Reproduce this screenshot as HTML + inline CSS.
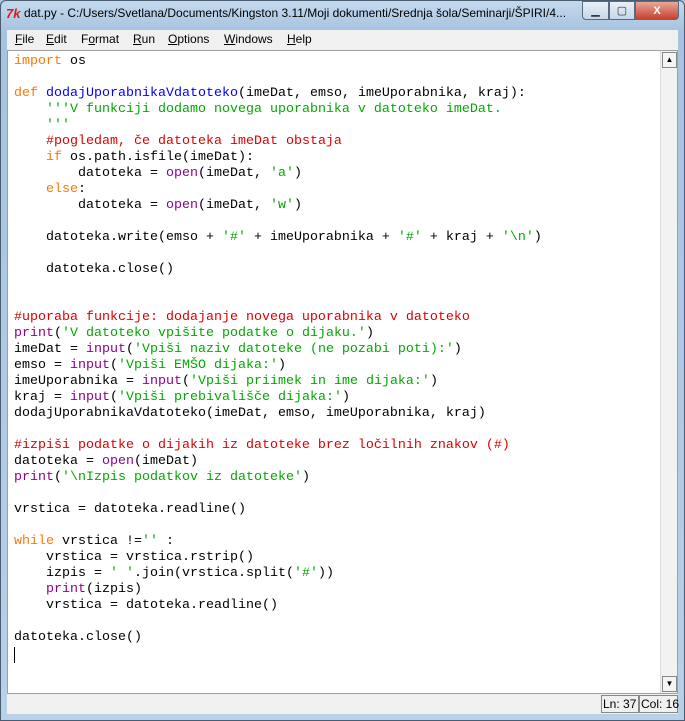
<!DOCTYPE html>
<html><head><meta charset="utf-8"><style>
*{margin:0;padding:0;box-sizing:border-box}
body{width:685px;height:721px;overflow:hidden;background:#a9c6e3;font-family:"Liberation Sans",sans-serif;position:relative}
.frame{position:absolute;inset:0;background:linear-gradient(#c4d9ee,#a7c3e0 30px,#b8d0e8);border:1px solid #4a5c70;border-radius:6px 6px 0 0}
.title{position:absolute;left:24px;top:6px;font-size:12px;color:#000;white-space:nowrap}
.logo{position:absolute;left:6px;top:6px;font-size:13px;color:#d02020;font-style:italic;font-weight:bold}
.btns{position:absolute;right:6px;top:1px;display:flex}
.b{height:19px;border:1px solid #5a6a80;background:linear-gradient(#e8f0f8,#c6d6e8);display:flex;align-items:center;justify-content:center;font-size:11px;color:#333}
.x{width:44px;background:linear-gradient(#e8a898,#c84030);color:#fff;font-weight:bold;border-radius:0 0 4px 0}
.menu{position:absolute;left:7px;top:30px;width:671px;height:20px;background:#f0f0f0;font-size:12px}
.menu span{position:absolute;top:2px}
.menu u{text-decoration:underline}
.ed{position:absolute;left:7px;top:50px;width:671px;height:644px;background:#fff;border:1px solid #a0a0a0}
pre{position:absolute;left:6px;top:3px;font-family:"Liberation Mono",monospace;font-size:13.33px;line-height:16px;color:#000}
.k{color:#ff7700}.f{color:#0000ff}.s{color:#00aa00}.c{color:#dd0000}.p{color:#900090}
.sb{position:absolute;right:0;top:0;width:17px;height:642px;background:#f2f2f2;border-left:1px solid #ddd}
.ar{position:absolute;left:1px;width:15px;height:16px;background:#f4f4f4;border:1px solid #888;font-size:8px;text-align:center;line-height:14px}
.status{position:absolute;left:7px;top:694px;width:671px;height:20px;background:#f0f0f0;font-size:12px}
.cell{position:absolute;top:1px;height:18px;border:1px solid #888;padding:1px 1px;white-space:nowrap;line-height:15px}
.cur{position:absolute;left:6px;top:596px;width:1px;height:16px;background:#000}
</style></head><body>
<div class="frame"></div>
<div class="logo">7k</div>
<div class="title">dat.py - C:/Users/Svetlana/Documents/Kingston 3.11/Moji dokumenti/Srednja šola/Seminarji/ŠPIRI/4...</div>
<div class="btns"><div class="b" style="width:27px;border-radius:0 0 0 4px">▁</div><div class="b" style="width:26px">▢</div><div class="b x">X</div></div>
<div class="menu"><span style="left:8px"><u>F</u>ile</span><span style="left:39px"><u>E</u>dit</span><span style="left:74px">F<u>o</u>rmat</span><span style="left:126px"><u>R</u>un</span><span style="left:161px"><u>O</u>ptions</span><span style="left:217px"><u>W</u>indows</span><span style="left:280px"><u>H</u>elp</span></div>
<div class="ed">
<pre><span class="k">import</span> os

<span class="k">def</span> <span class="f">dodajUporabnikaVdatoteko</span>(imeDat, emso, imeUporabnika, kraj):
    <span class="s">'''V funkciji dodamo novega uporabnika v datoteko imeDat.
    '''</span>
    <span class="c">#pogledam, če datoteka imeDat obstaja</span>
    <span class="k">if</span> os.path.isfile(imeDat):
        datoteka = <span class="p">open</span>(imeDat, <span class="s">'a'</span>)
    <span class="k">else</span>:
        datoteka = <span class="p">open</span>(imeDat, <span class="s">'w'</span>)

    datoteka.write(emso + <span class="s">'#'</span> + imeUporabnika + <span class="s">'#'</span> + kraj + <span class="s">'\n'</span>)

    datoteka.close()


<span class="c">#uporaba funkcije: dodajanje novega uporabnika v datoteko</span>
<span class="p">print</span>(<span class="s">'V datoteko vpišite podatke o dijaku.'</span>)
imeDat = <span class="p">input</span>(<span class="s">'Vpiši naziv datoteke (ne pozabi poti):'</span>)
emso = <span class="p">input</span>(<span class="s">'Vpiši EMŠO dijaka:'</span>)
imeUporabnika = <span class="p">input</span>(<span class="s">'Vpiši priimek in ime dijaka:'</span>)
kraj = <span class="p">input</span>(<span class="s">'Vpiši prebivališče dijaka:'</span>)
dodajUporabnikaVdatoteko(imeDat, emso, imeUporabnika, kraj)

<span class="c">#izpiši podatke o dijakih iz datoteke brez ločilnih znakov (#)</span>
datoteka = <span class="p">open</span>(imeDat)
<span class="p">print</span>(<span class="s">'\nIzpis podatkov iz datoteke'</span>)

vrstica = datoteka.readline()

<span class="k">while</span> vrstica !=<span class="s">''</span> :
    vrstica = vrstica.rstrip()
    izpis = <span class="s">' '</span>.join(vrstica.split(<span class="s">'#'</span>))
    <span class="p">print</span>(izpis)
    vrstica = datoteka.readline()

datoteka.close()</pre>
<div class="cur"></div>
<div class="sb"><div class="ar" style="top:1px">▲</div><div class="ar" style="bottom:1px">▼</div></div>
</div>
<div class="status"><div class="cell" style="left:594px;width:38px">Ln: 37</div><div class="cell" style="left:632px;width:39px">Col: 16</div></div>
</body></html>
